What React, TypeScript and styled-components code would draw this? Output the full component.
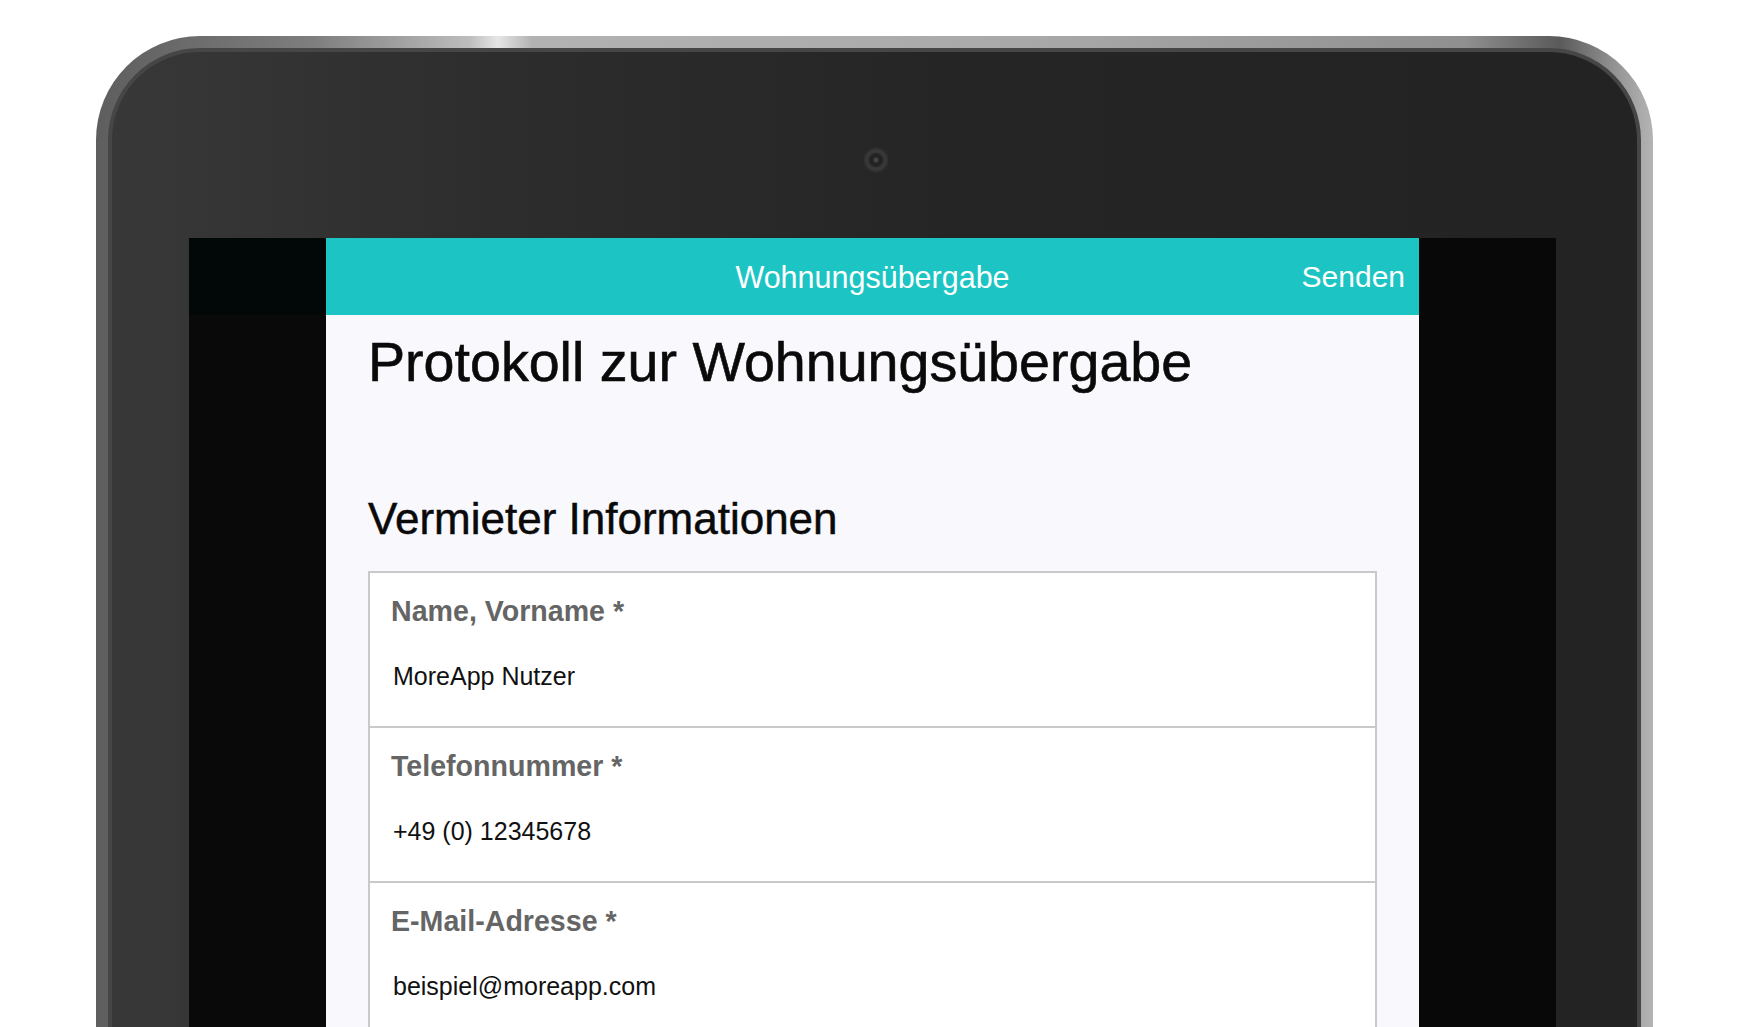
import { createGlobalStyle, styled } from "styled-components";

const GlobalStyle = createGlobalStyle`
  html, body {
    margin: 0;
    padding: 0;
    height: 100%;
    overflow: hidden;
    background: #ffffff;
  }
  * {
    box-sizing: border-box;
  }
`;

interface FieldInfo {
  label: string;
  value: string;
}

const fields: FieldInfo[] = [
  { label: "Name, Vorname *", value: "MoreApp Nutzer" },
  { label: "Telefonnummer *", value: "+49 (0) 12345678" },
  { label: "E-Mail-Adresse *", value: "beispiel@moreapp.com" },
];

function App() {
  return (
    <Page>
      <GlobalStyle />
      <Frame>
        <Bezel>
          <CameraRow>
            <Camera />
          </CameraRow>
          <Screen>
            <Rail side="left" />
            <AppView>
              <TopBar>
                <span />
                <BarTitle>Wohnungsübergabe</BarTitle>
                <SendButton>Senden</SendButton>
              </TopBar>
              <Content>
                <FormTitle>Protokoll zur Wohnungsübergabe</FormTitle>
                <SectionTitle>Vermieter Informationen</SectionTitle>
                <Card>
                  {fields.map((f) => (
                    <Field key={f.label}>
                      <Label>{f.label}</Label>
                      <Value>{f.value}</Value>
                    </Field>
                  ))}
                </Card>
              </Content>
            </AppView>
            <Rail side="right" />
          </Screen>
        </Bezel>
      </Frame>
    </Page>
  );
}

export default App;

const Page = styled.div`
  width: 1750px;
  height: 1027px;
  overflow: hidden;
  padding: 36px 0 0 96px;
  background: #ffffff;
  font-family: "Liberation Sans", Arial, Helvetica, sans-serif;
`;

const Frame = styled.div`
  width: 1557px;
  height: 1140px;
  padding: 12px 12px 0;
  border-radius: 104px;
  background: linear-gradient(
    90deg,
    #5e5e5e 0%,
    #7e7e7e 14%,
    #bdbdbd 24%,
    #e6e6e6 25.8%,
    #b2b2b2 28%,
    #a9a9a9 60%,
    #8f8f8f 88%,
    #5a5a5a 94%,
    #9a9a9a 98%,
    #b4b4b4 100%
  );
`;

const Bezel = styled.div`
  height: 100%;
  display: flex;
  flex-direction: column;
  padding: 0 81px 0 77px;
  border: 4px solid #464646;
  border-radius: 92px;
  background: linear-gradient(
    90deg,
    #383838 0%,
    #2d2d2d 25%,
    #252525 55%,
    #232323 100%
  );
`;

const CameraRow = styled.div`
  height: 186px;
  display: flex;
  justify-content: center;
  padding-top: 95px;
  padding-left: 6px;
`;

const Camera = styled.div`
  width: 26px;
  height: 26px;
  border-radius: 50%;
  background: radial-gradient(
    circle,
    #444446 0 2px,
    #232324 3px 6px,
    #38383a 8px 10px,
    #282829 13px
  );
`;

const Screen = styled.div`
  flex: 1;
  display: flex;
  background: #080808;
`;

const Rail = styled.div<{ side: "left" | "right" }>`
  width: 137px;
  flex-shrink: 0;
  background: ${(p) =>
    p.side === "left"
      ? "linear-gradient(#020707 0 77px, #090909 77px)"
      : "#080808"};
`;

const AppView = styled.div`
  flex: 1;
  display: flex;
  flex-direction: column;
  background: #f9f9fd;
`;

const TopBar = styled.div`
  height: 77px;
  display: grid;
  grid-template-columns: 1fr auto 1fr;
  align-items: center;
  padding: 0 14px;
  background: #1cc5c3;
  color: #ffffff;
`;

const BarTitle = styled.div`
  font-size: 30.5px;
  line-height: 36px;
`;

const SendButton = styled.div`
  justify-self: end;
  font-size: 30px;
  line-height: 36px;
  cursor: pointer;
`;

const Content = styled.div`
  padding: 15px 42px 0;
`;

const FormTitle = styled.h1`
  margin: 0;
  font-size: 55.6px;
  line-height: 64px;
  font-weight: 400;
  color: #0a0a0a;
  -webkit-text-stroke: 0.6px #0a0a0a;
`;

const SectionTitle = styled.h2`
  margin: 99px 0 0;
  font-size: 44px;
  line-height: 52px;
  font-weight: 400;
  color: #0a0a0a;
  -webkit-text-stroke: 0.5px #0a0a0a;
`;

const Card = styled.div`
  margin-top: 26px;
  border: 2px solid #c9c9c9;
  border-bottom: none;
  background: #ffffff;
`;

const Field = styled.div`
  padding: 21px 21px 35px;
  border-bottom: 2px solid #c9c9c9;
`;

const Label = styled.div`
  font-size: 28.6px;
  line-height: 34px;
  font-weight: 700;
  color: #656565;
`;

const Value = styled.div`
  margin-top: 33px;
  padding-left: 2px;
  font-size: 25px;
  line-height: 30px;
  color: #111111;
`;
